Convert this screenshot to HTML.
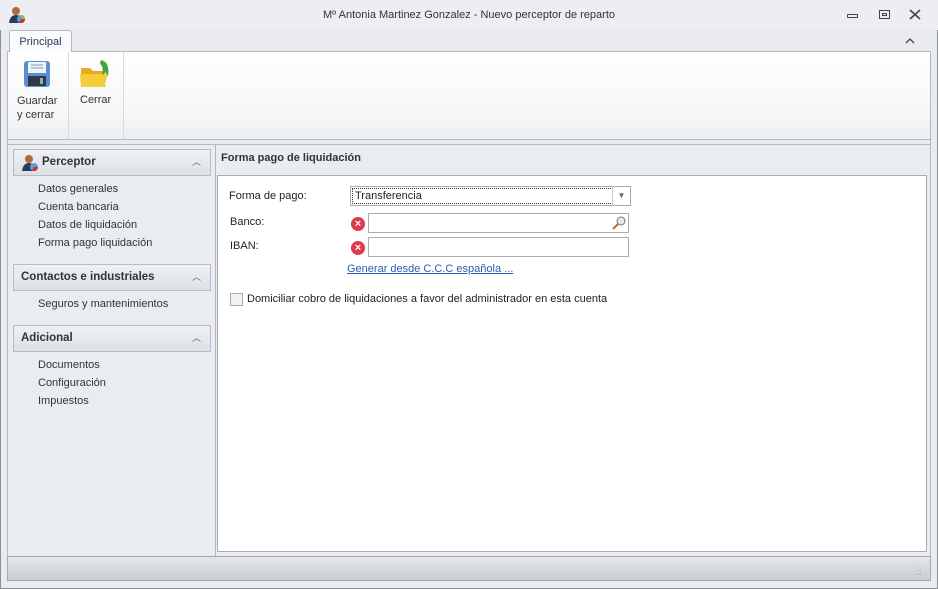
<!DOCTYPE html>
<html><head><meta charset="utf-8"><style>
*{margin:0;padding:0;box-sizing:border-box}
body{width:938px;height:589px;overflow:hidden;font-family:"Liberation Sans","DejaVu Sans",sans-serif;font-size:11px;color:#222;background:#eceef1;position:relative}
.a{position:absolute}
.win{left:0;top:0;width:938px;height:589px;border:1px solid #8a9097;background:#e9ebee}
.title{left:0;top:0;width:938px;height:30px;background:#eceef1;text-align:center;line-height:30px;font-size:11px;color:#333}
.tab{left:9px;top:30px;width:63px;height:22px;background:#fafbfc;border:1px solid #b5b9bf;border-bottom:none;border-radius:3px 3px 0 0;text-align:center;line-height:22px;color:#1e395b}
.ribbon{left:7px;top:51px;width:924px;height:89px;background:linear-gradient(#fefefe,#f6f7f8 70%,#eceef0);border:1px solid #b5b9bf}
.sep{top:52px;width:1px;height:87px;background:#d8dadd}
.body{left:7px;top:140px;width:924px;height:416px;background:#e9ecf0;border-left:1px solid #b5b9bf;border-right:1px solid #b5b9bf}
.grp{left:13px;width:198px;height:27px;border:1px solid #b9bdc3;background:linear-gradient(#eef0f3,#dde1e6);font-weight:bold;font-size:11.5px;color:#333;line-height:25px;padding-left:7px}
.car{right:9px;top:0;font-size:9px;color:#666;font-weight:normal}
.lk{left:38px;color:#333}
.panel{left:217px;top:175px;width:710px;height:377px;background:#fff;border:1px solid #a9adb3}
.inp{height:20px;border:1px solid #abadb3;background:#fff}
.err{width:14px;height:14px;border-radius:50%;background:#e0384f;color:#fff;font-size:11px;line-height:14px;text-align:center;font-weight:bold}
.status{left:7px;top:556px;width:924px;height:25px;background:linear-gradient(#e4e7ea,#c9ccd0);border:1px solid #a5a9ae}
</style></head><body>
<div class="a win"></div>
<div class="a title">Mº Antonia Martinez Gonzalez - Nuevo perceptor de reparto</div>
<svg class="a" style="left:8px;top:6px" width="18" height="18"><circle cx="8" cy="5" r="4" fill="#b06a40"/><path d="M1 17 Q2 9 8 9 Q14 9 15 17Z" fill="#2c3a5e"/><circle cx="13" cy="13" r="4" fill="#5aa0d8"/><path d="M13 13 L13 9 A4 4 0 0 1 17 13Z" fill="#8cc040"/><path d="M13 13 L17 13 A4 4 0 0 1 11 16.5Z" fill="#d03030"/></svg>
<div class="a" style="left:847px;top:14px;width:11px;height:4px;border:1px solid #444;border-radius:1px"></div>
<div class="a" style="left:879px;top:10px;width:11px;height:9px;border:1px solid #444"><div style="margin:2px auto;width:5px;height:3px;border:1px solid #444"></div></div>
<svg class="a" style="left:909px;top:9px" width="12" height="11"><path d="M1 1L11 10M11 1L1 10" stroke="#444" stroke-width="1.6"/></svg>
<svg class="a" style="left:905px;top:37px" width="10" height="7"><path d="M1 6L5 2L9 6" stroke="#444" stroke-width="1.3" fill="none"/></svg>
<div class="a ribbon"></div>
<div class="a tab">Principal</div>
<div class="a sep" style="left:68px"></div>
<div class="a sep" style="left:123px"></div>
<svg class="a" style="left:23px;top:60px" width="28" height="28"><rect x="1" y="1" width="26" height="26" rx="3" fill="#5d8fd0"/><rect x="5" y="2" width="18" height="11" fill="#f0f4f8"/><path d="M8 5h12M8 8h12" stroke="#8899aa"/><rect x="5" y="16" width="18" height="10" fill="#2e3a4a"/><rect x="17" y="18" width="3" height="6" fill="#9ab"/></svg>
<div class="a" style="left:17px;top:94px;line-height:14px;color:#333">Guardar<br>y cerrar</div>
<svg class="a" style="left:79px;top:58px" width="34" height="32"><path d="M2 10h9l3 3h12v16H2Z" fill="#e8a820"/><path d="M1 16h28l-4 13H2Z" fill="#f7cc3a"/><path d="M22 2 Q31 4 29 18 L26 14 L23 18 Q25 8 21 6Z" fill="#3ca83a"/></svg>
<div class="a" style="left:80px;top:94px;color:#333">Cerrar</div>
<div class="a body"></div>
<div class="a" style="left:8px;top:144px;width:208px;height:412px;border-right:1px solid #b5b9bf;border-top:1px solid #b5b9bf"></div>
<div class="a" style="left:216px;top:144px;width:714px;height:1px;background:#b5b9bf"></div>
<div class="a grp" style="top:149px;padding-left:28px">Perceptor<span class="a car">︿</span></div>
<svg class="a" style="left:21px;top:154px" width="18" height="18"><circle cx="8" cy="5" r="4" fill="#b06a40"/><path d="M1 17 Q2 9 8 9 Q14 9 15 17Z" fill="#2c3a5e"/><circle cx="13" cy="13" r="4" fill="#5aa0d8"/><path d="M13 13 L17 13 A4 4 0 0 1 11 16.5Z" fill="#d03030"/></svg>
<div class="a lk" style="top:183px">Datos generales</div>
<div class="a lk" style="top:201px">Cuenta bancaria</div>
<div class="a lk" style="top:219px">Datos de liquidación</div>
<div class="a lk" style="top:237px">Forma pago liquidación</div>
<div class="a grp" style="top:264px">Contactos e industriales<span class="a car">︿</span></div>
<div class="a lk" style="top:298px">Seguros y mantenimientos</div>
<div class="a grp" style="top:325px">Adicional<span class="a car">︿</span></div>
<div class="a lk" style="top:359px">Documentos</div>
<div class="a lk" style="top:377px">Configuración</div>
<div class="a lk" style="top:395px">Impuestos</div>
<div class="a" style="left:221px;top:152px;font-weight:bold;color:#333">Forma pago de liquidación</div>
<div class="a panel"></div>
<div class="a" style="left:229px;top:190px">Forma de pago:</div>
<div class="a inp" style="left:350px;top:186px;width:281px;border-color:#a9adb3"><div style="margin:1px;height:16px;border:1px dotted #333;width:261px;padding-left:2px;line-height:14px">Transferencia</div><div class="a" style="right:0;top:0;width:18px;height:18px;border-left:1px solid #ccc;text-align:center;font-size:8px;line-height:18px;color:#666">▼</div></div>
<div class="a" style="left:230px;top:216px">Banco:</div>
<div class="a err" style="left:351px;top:217px">×</div>
<div class="a inp" style="left:368px;top:213px;width:261px"><svg class="a" style="right:2px;top:2px" width="14" height="14"><circle cx="9" cy="5" r="4" fill="#dde8f0" stroke="#777"/><path d="M6 8L1 13" stroke="#b07030" stroke-width="2"/></svg></div>
<div class="a" style="left:230px;top:240px">IBAN:</div>
<div class="a err" style="left:351px;top:241px">×</div>
<div class="a inp" style="left:368px;top:237px;width:261px"></div>
<div class="a" style="left:347px;top:263px;color:#2a5db0;text-decoration:underline">Generar desde C.C.C española ...</div>
<div class="a" style="left:230px;top:293px;width:13px;height:13px;border:1px solid #aaa;background:#f2f2f2"></div>
<div class="a" style="left:247px;top:293px">Domiciliar cobro de liquidaciones a favor del administrador en esta cuenta</div>
<div class="a status"></div>
<div class="a" style="left:916px;top:565px;font-size:8px;color:#999;letter-spacing:-1px;line-height:4px">&nbsp;&nbsp;·<br>&nbsp;··<br>···</div>
</body></html>
